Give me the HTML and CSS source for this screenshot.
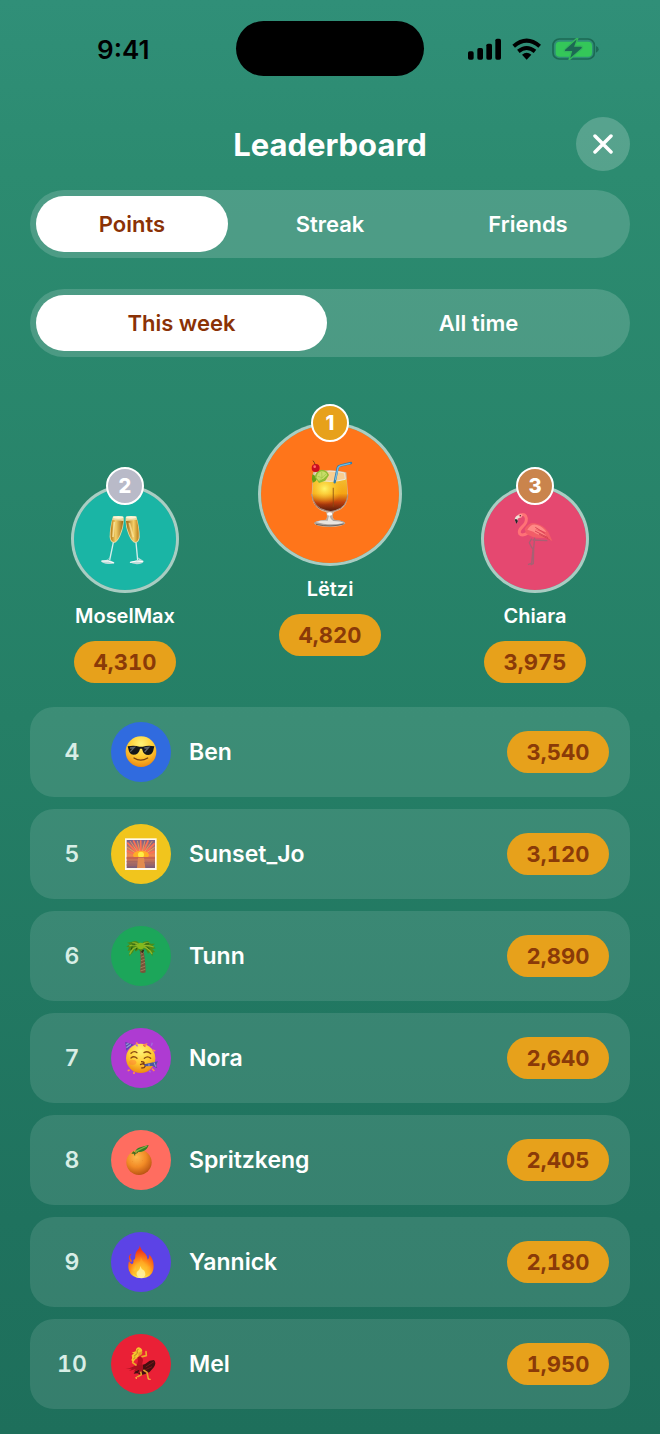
FILE: index.html
```html
<!DOCTYPE html>
<html lang="en">
<head>
<meta charset="utf-8">
<meta name="viewport" content="width=device-width, initial-scale=1">
<title>Leaderboard</title>
<link rel="stylesheet" href="styles.css">
</head>
<body>
<div class="status">
  <span class="status-time">9:41</span>
  <span class="island"></span>
  <span class="status-icons">
    <svg width="33" height="22" viewBox="54 52 99 66" aria-hidden="true"><rect x="54" y="92" width="17" height="25" rx="5"/><rect x="82" y="82" width="17" height="35" rx="5"/><rect x="109" y="69" width="17" height="48" rx="5"/><rect x="136" y="54" width="17" height="63" rx="5"/></svg>
    <svg width="29" height="22" viewBox="186 52 87 66" aria-hidden="true"><g fill="none" stroke="#000" stroke-width="12"><path d="M191 77Q230 43 269 77"/><path d="M205 92Q230 72 255 92"/></g><path d="M216 102Q230 91 244 102L230 117Z"/></svg>
    <svg width="47" height="22" viewBox="306 52 141 66" aria-hidden="true"><rect x="309" y="55" width="124" height="60" rx="19" fill="none" stroke="#1c6954" stroke-width="5"/><rect x="317" y="63" width="109" height="45" rx="12" fill="#34c759"/><path d="M438 76Q446 78 446 86T438 96Z" fill="#1c6954"/><path d="M379 54L344 86Q340 93 348 93H364L357 118L396 84Q400 76 392 76H375L383 54Z" fill="#1c6954" stroke="#34b75c" stroke-width="4"/></svg>
  </span>
</div>

<main class="page">
  <header class="header">
    <h1 class="title">Leaderboard</h1>
    <button class="close" type="button" aria-label="Close"><svg width="20" height="20" viewBox="0 0 20 20" aria-hidden="true"><path d="M2 2L18 18M18 2L2 18" fill="none" stroke="#fff" stroke-width="3.5" stroke-linecap="round"/></svg></button>
  </header>

  <nav class="segments" aria-label="Ranking">
    <button class="segment selected" type="button" aria-pressed="true">Points</button>
    <button class="segment" type="button" aria-pressed="false">Streak</button>
    <button class="segment" type="button" aria-pressed="false">Friends</button>
  </nav>
  <nav class="segments period" aria-label="Period">
    <button class="segment selected" type="button" aria-pressed="true">This week</button>
    <button class="segment" type="button" aria-pressed="false">All time</button>
  </nav>

  <section class="podium" aria-label="Top three">
    <article class="place">
      <div class="medal teal"><span class="badge silver">2</span>
        <svg width="56" height="56" viewBox="112 168 168 168" aria-hidden="true">
          <defs><linearGradient id="champagne" x1="0" x2="1"><stop offset="0" stop-color="#b77d16"/><stop offset=".4" stop-color="#f4cf68"/><stop offset="1" stop-color="#9d6812"/></linearGradient></defs>
          <g><path d="M160 184L192 188Q194 215 182 242Q173 262 162 264Q151 261 150 246Q150 217 160 184Z" fill="#e9d9a0"/><path d="M158 194L191 198Q189 220 180 241Q172 259 163 261Q153 258 153 245Q152 224 158 194Z" fill="url(#champagne)"/><path d="M164 201L160 246" stroke="#fff1b3" stroke-width="5" opacity=".7"/><ellipse cx="176" cy="187" rx="16" ry="4" fill="#fff4d2"/><path d="M161 262L150 315" stroke="#d5eeeb" stroke-width="4"/><path d="M150 307L145 315Q160 318 165 324Q157 329 138 326Q123 322 124 317L143 314Z" fill="#bfdcda"/><path d="M126 318Q147 315 163 324" fill="none" stroke="#fff" stroke-width="3"/></g>
          <g transform="translate(390 0) scale(-1 1)"><path d="M160 184L192 188Q194 215 182 242Q173 262 162 264Q151 261 150 246Q150 217 160 184Z" fill="#e9d9a0"/><path d="M158 194L191 198Q189 220 180 241Q172 259 163 261Q153 258 153 245Q152 224 158 194Z" fill="url(#champagne)"/><path d="M181 204L169 247" stroke="#ffeaa0" stroke-width="5" opacity=".7"/><ellipse cx="176" cy="187" rx="16" ry="4" fill="#fff4d2"/><path d="M161 262L156 315" stroke="#d5eeeb" stroke-width="4"/><path d="M156 307L152 315Q168 317 181 322Q168 329 151 327Q138 324 138 318Z" fill="#bfdcda"/><path d="M140 320Q158 315 179 322" fill="none" stroke="#fff" stroke-width="3"/></g>
        </svg>
      </div>
      <h2 class="name">MoselMax</h2><span class="score">4,310</span>
    </article>
    <article class="place first">
      <div class="medal orange"><span class="badge gold">1</span>
        <svg width="50" height="70" viewBox="165 192 150 210" aria-hidden="true">
          <defs><linearGradient id="drink" x2="0" y2="1"><stop offset="0" stop-color="#f3bc30"/><stop offset=".45" stop-color="#f5a414"/><stop offset=".72" stop-color="#bd3f0d"/><stop offset="1" stop-color="#541c0c"/></linearGradient><radialGradient id="glow" cx=".35" cy=".3" r=".5"><stop stop-color="#fff56a"/><stop offset="1" stop-color="#ffc71c" stop-opacity="0"/></radialGradient></defs>
          <path d="M189 232Q238 220 289 232L294 296Q294 342 253 351L248 358Q247 368 253 374Q284 377 286 385Q278 396 240 396Q199 396 192 385Q196 377 228 374Q233 367 229 352Q187 342 185 300Z" fill="#d8b79c"/>
          <path d="M190 252Q240 266 290 252L292 300Q292 339 253 347Q240 351 222 346Q187 337 187 300Z" fill="url(#drink)"/><path d="M190 252Q240 266 290 252L292 300Q292 339 253 347Q240 351 222 346Q187 337 187 300Z" fill="url(#glow)"/>
          <path d="M196 234Q240 223 284 234L286 253Q240 265 194 253Z" fill="#f8ce91" stroke="#efe9d9" stroke-width="3"/>
          <path d="M185 297Q190 339 229 347Q243 352 255 347Q291 337 294 298" fill="none" stroke="#a89086" stroke-width="3"/>
          <path d="M228 352Q240 357 252 352L247 360Q247 370 253 375H227Q232 370 232 360Z" fill="#b8aaa0"/>
          <path d="M250 335V278" stroke="#864b12" stroke-width="4" opacity=".6"/><path d="M254 262L263 218Q264 213 270 212L303 204" fill="none" stroke="#347cac" stroke-width="7" stroke-linecap="round"/><path d="M256 255L264 218Q266 214 272 212L301 205" fill="none" stroke="#70bce4" stroke-width="4"/>
          <path d="M187 238Q184 252 188 263Q199 261 203 247Z" fill="#659f15"/><path d="M194 246Q197 227 215 224Q232 225 237 240L226 257L207 264Z" fill="#91bc32"/><path d="M199 248Q202 230 216 229Q228 230 232 240L222 250L207 258Z" fill="#c7dc68"/><path d="M215 231L216 248L203 244M216 248L228 237M216 248L207 257" fill="none" stroke="#9ec443" stroke-width="2"/>
          <path d="M196 211Q194 202 189 197" fill="none" stroke="#754018" stroke-width="3"/><circle cx="197" cy="219" r="12" fill="#ca0c20"/><circle cx="194" cy="215" r="4" fill="#ff6b66"/>
          <ellipse cx="239" cy="384" rx="46" ry="10" fill="#aaa29d"/><path d="M197 381Q214 376 233 377L238 358Q239 372 250 378Q274 378 282 384Q253 390 220 386Z" fill="#e9e5e0"/><path d="M198 388Q241 398 281 387" fill="none" stroke="#6f6763" stroke-width="3"/><ellipse cx="239" cy="357" rx="8" ry="5" fill="#fff"/>
        </svg>
      </div>
      <h2 class="name">Lëtzi</h2><span class="score">4,820</span>
    </article>
    <article class="place">
      <div class="medal pink"><span class="badge bronze">3</span>
        <svg width="56" height="56" viewBox="111 168 168 168" aria-hidden="true">
          <path d="M185 251L178 263L184 276L189 282L185 324L174 329M194 247L191 280L190 326L182 330M188 255L232 257" fill="none" stroke="#a86073" stroke-width="4"/>
          <path d="M151 180Q166 174 169 190Q170 204 158 214Q144 227 149 236Q156 246 177 232" fill="none" stroke="#ff7276" stroke-width="9" stroke-linecap="round"/>
          <path d="M164 222Q178 199 201 206Q222 211 235 231L247 258L225 248Q208 251 190 247Q174 242 168 235Z" fill="#f25d68"/>
          <path d="M172 224Q184 204 201 210Q220 215 229 232Q208 223 194 223Q212 229 229 242Q205 242 190 230" fill="#ff8a86"/><path d="M196 217L225 235M195 228L234 248M207 237L239 254" stroke="#d94455" stroke-width="3"/>
          <path d="M145 178Q152 173 158 180L154 188L145 190Z" fill="#ff9795"/><path d="M145 180Q135 183 134 194L139 206L144 198L142 192L150 187Z" fill="#eee0d7"/><path d="M134 193L139 207L144 198L140 193Z" fill="#292228"/><circle cx="151" cy="182" r="2" fill="#472228"/>
        </svg>
      </div>
      <h2 class="name">Chiara</h2><span class="score">3,975</span>
    </article>
  </section>

  <ol class="list" start="4">
    <li class="row"><span class="rank">4</span><span class="avatar blue">
      <svg width="36" height="36" viewBox="0 0 108 108" aria-hidden="true"><defs><radialGradient id="face" cx=".5" cy=".25" r=".75"><stop stop-color="#fff477"/><stop offset=".55" stop-color="#ffcc32"/><stop offset="1" stop-color="#ed8910"/></radialGradient></defs><circle cx="54" cy="53" r="46" fill="url(#face)"/><path d="M14 37Q33 33 49 38H59Q76 33 94 37L92 44Q90 62 76 63Q61 63 57 44H51Q48 62 31 62Q18 60 16 44Z" fill="#151719"/><path d="M21 42L34 40L22 53M64 42L77 40L65 54" fill="none" stroke="#59616a" stroke-width="4"/><path d="M33 72Q53 85 74 72" fill="none" stroke="#79410c" stroke-width="4" stroke-linecap="round"/></svg>
    </span><span class="player">Ben</span><span class="score">3,540</span></li>
    <li class="row"><span class="rank">5</span><span class="avatar yellow">
      <svg width="36" height="36" viewBox="0 0 108 108" aria-hidden="true"><defs><linearGradient id="sky" x2="0" y2="1"><stop stop-color="#76618b"/><stop offset=".55" stop-color="#f18650"/><stop offset=".62" stop-color="#dc7b50"/><stop offset="1" stop-color="#785b78"/></linearGradient></defs><rect x="6" y="7" width="95" height="95" fill="#fff9ed"/><rect x="11" y="12" width="85" height="84" fill="url(#sky)"/><path d="M54 62L13 20M54 62L31 13M54 62L53 13M54 62L76 13M54 62L95 22M54 62L12 44M54 62L95 46" stroke="#ff7052" stroke-width="5"/><path d="M54 62L21 15M54 62L43 14M54 62L66 14M54 62L88 15M54 62L12 33M54 62L95 34" stroke="#ffae58" stroke-width="2"/><ellipse cx="54" cy="57" rx="24" ry="13" fill="#ffad25"/><circle cx="54" cy="56" r="9" fill="#ffed45"/><path d="M11 63H96V69H11Z" fill="#c7644f"/><path d="M45 65H63L67 96H42Z" fill="#e28b4e"/><path d="M11 77H43M64 80H96M11 87H40" stroke="#a7655e" stroke-width="3"/></svg>
    </span><span class="player">Sunset_Jo</span><span class="score">3,120</span></li>
    <li class="row"><span class="rank">6</span><span class="avatar green">
      <svg width="36" height="36" viewBox="70 82 108 108" aria-hidden="true"><path d="M120 117L130 115Q137 142 138 185Q129 190 121 184Q126 146 120 117Z" fill="#785439"/><path d="M123 131L131 126M124 140L133 136M124 150L135 146M123 161L136 155M122 172L137 166M122 181L137 176" stroke="#b58d65" stroke-width="2"/><path d="M119 117L129 128L134 117Z" fill="#302b16"/><path d="M122 105Q117 90 105 91L94 94L82 96L91 101L80 108L88 110L84 121L91 119L88 137L100 125L105 114L108 123L119 115L124 123L133 113L140 119L145 129L151 124L158 137L160 125L166 124L158 115L168 113L158 105L166 99L153 99L145 91L132 93Z" fill="#4c8b17"/><path d="M120 108Q106 98 89 106M120 108Q99 108 90 131M121 107Q112 94 98 97M125 107Q141 101 162 109M125 107Q146 109 157 130M124 106Q133 93 150 98" fill="none" stroke="#8fb529" stroke-width="4"/><path d="M98 108L94 117M107 101L96 100M142 108L150 116M137 100L149 99M112 111L108 119" stroke="#24580e" stroke-width="3"/><circle cx="123" cy="106" r="10" fill="#83b91d"/></svg>
    </span><span class="player">Tunn</span><span class="score">2,890</span></li>
    <li class="row"><span class="rank">7</span><span class="avatar purple">
      <svg width="36" height="36" viewBox="70 388 108 108" aria-hidden="true"><circle cx="123" cy="443" r="44" fill="url(#face)"/><path d="M77 394L102 402Q91 407 80 420Z" fill="#514ba6"/><path d="M79 402L87 398M80 411L94 401" stroke="#9491d4" stroke-width="4"/><path d="M94 428Q103 419 112 426M133 426Q144 419 153 429M94 442Q103 434 112 443M134 443Q144 434 153 443" fill="none" stroke="#8b4b12" stroke-width="4" stroke-linecap="round"/><ellipse cx="99" cy="455" rx="11" ry="8" fill="#ff7b37" opacity=".45"/><path d="M124 453Q137 453 132 460Q142 463 133 471L125 472M131 459L121 462" fill="none" stroke="#783714" stroke-width="4"/><path d="M134 461L161 455L175 452Q166 465 173 473L158 466L136 467Z" fill="#4e559f"/><path d="M148 459V466M163 455L168 468" stroke="#9da4d5" stroke-width="3"/><path d="M109 396L115 400M130 404L139 401L135 409M158 418L167 421M84 480L90 478M103 483V490M157 474L164 481" stroke="#ff8b52" stroke-width="5"/><path d="M158 396L155 405M153 485L148 480M109 403L114 407" stroke="#a46bde" stroke-width="4"/></svg>
    </span><span class="player">Nora</span><span class="score">2,640</span></li>
    <li class="row"><span class="rank">8</span><span class="avatar coral">
      <svg width="36" height="36" viewBox="70 94 108 108" aria-hidden="true"><defs><radialGradient id="orange" cx=".4" cy=".3" r=".7"><stop stop-color="#ffb94f"/><stop offset=".55" stop-color="#f28b26"/><stop offset="1" stop-color="#bd5613"/></radialGradient></defs><circle cx="118" cy="155" r="38" fill="url(#orange)"/><path d="M101 122L109 126L118 120L114 127L107 130L106 137L102 129L95 129Z" fill="#466e21"/><path d="M105 127Q108 114 122 110Q136 105 147 103Q143 116 132 121Q119 127 109 121Z" fill="#337c26"/><path d="M107 123Q123 115 142 106" fill="none" stroke="#82b346" stroke-width="4"/><g fill="#e47d24"><circle cx="98" cy="152" r="1"/><circle cx="112" cy="166" r="1"/><circle cx="128" cy="149" r="1"/><circle cx="133" cy="168" r="1"/><circle cx="112" cy="145" r="1"/></g></svg>
    </span><span class="player">Spritzkeng</span><span class="score">2,405</span></li>
    <li class="row"><span class="rank">9</span><span class="avatar indigo">
      <svg width="36" height="36" viewBox="70 401 108 108" aria-hidden="true"><defs><radialGradient id="fire" cx=".5" cy=".92" r=".85"><stop stop-color="#fffce1"/><stop offset=".25" stop-color="#ffe23c"/><stop offset=".55" stop-color="#ff8c17"/><stop offset=".9" stop-color="#ef351c"/></radialGradient></defs><path d="M120 404Q123 419 137 430Q144 437 144 448Q151 441 148 432Q162 446 162 468Q162 501 126 504Q93 503 87 477Q84 464 88 452Q91 459 97 462Q103 459 101 449Q107 448 107 439Q105 427 114 419Q121 413 120 404ZM96 430Q89 437 93 445Q99 452 94 456Q86 450 88 438Q90 431 96 430Z" fill="url(#fire)"/><path d="M123 438Q125 449 135 459Q142 466 140 475Q147 472 149 465Q154 500 126 502Q105 501 98 482Q107 485 108 477Q108 467 113 463Q124 455 123 438Z" fill="#ffad24" opacity=".55"/><path d="M122 467Q125 478 134 481Q143 500 125 503Q107 499 112 484Q121 480 122 467Z" fill="#fff5a1" opacity=".8"/></svg>
    </span><span class="player">Yannick</span><span class="score">2,180</span></li>
    <li class="row"><span class="rank">10</span><span class="avatar red">
      <svg width="36" height="36" viewBox="281 106 108 108" aria-hidden="true"><path d="M336 164Q350 160 361 150L374 148Q382 157 374 169L361 184Q347 191 334 194L324 188L313 189L318 182L330 176Z" fill="#420f10"/><path d="M323 160L341 162Q343 175 338 184L326 189L330 177L312 183L319 175L299 181L308 174L289 175Q312 171 323 160Z" fill="#aa1020"/><path d="M349 169L374 153M345 179L368 168" stroke="#791519" stroke-width="3"/><path d="M323 138H338L341 149L338 163L323 162L326 150Z" fill="#b80e22"/><path d="M322 141Q311 145 310 156L320 163M338 138L351 135L350 123" fill="none" stroke="#efa82a" stroke-width="5" stroke-linecap="round" stroke-linejoin="round"/><path d="M342 178L353 185L357 205M334 183L336 192L325 198" fill="none" stroke="#e9a12c" stroke-width="5" stroke-linejoin="round"/><path d="M356 205L364 206M325 198L319 201L322 205" fill="none" stroke="#ffcc3c" stroke-width="3"/><path d="M331 119Q340 118 339 128Q337 135 330 136Q325 132 326 125Z" fill="#e69b2a"/><path d="M339 121Q337 110 326 110Q319 113 319 122L307 126L314 128L307 134Q310 141 306 149L312 153L320 143L329 137L327 126Z" fill="#f6c52e"/><path d="M327 115Q321 119 324 128L314 137M312 145L318 140" fill="none" stroke="#9b5d15" stroke-width="2"/></svg>
    </span><span class="player">Mel</span><span class="score">1,950</span></li>
  </ol>
</main>
</body>
</html>
```
FILE: styles.css
```css
* { box-sizing: border-box; }

body {
  margin: 0;
  min-height: 100vh;
  background: linear-gradient(180deg, #308f78 0%, #2c8b70 12%, #257f66 50%, #1f725e 85%, #1e6f5b 100%);
  color: #fff;
  font-family: Inter, "Liberation Sans", sans-serif;
  font-weight: 600;
}

button { border: 0; font: inherit; color: inherit; cursor: pointer; }
svg { display: block; flex: none; }

.status {
  display: grid;
  grid-template-columns: 1fr 188px 1fr;
  align-items: center;
  padding-top: 21px;
  color: #000;
}
.status-time { padding: 2px 0 0 97px; font-size: 26px; line-height: 32px; }
.island { height: 55px; border-radius: 28px; background: #000; }
.status-icons { display: flex; justify-content: flex-end; gap: 11px; padding-right: 61px; }

.page { padding: 41px 30px 26px; }

.header {
  display: grid;
  grid-template-columns: 54px 1fr 54px;
  align-items: center;
  margin-bottom: 19px;
}
.title { grid-column: 2; margin: 0; padding-top: 2px; text-align: center; font-size: 31px; line-height: 40px; font-weight: 700; }
.close {
  display: grid;
  place-items: center;
  width: 54px;
  height: 54px;
  padding: 0;
  border-radius: 50%;
  background: rgba(255, 255, 255, .2);
}

.segments {
  display: flex;
  gap: 6px;
  padding: 6px;
  margin-bottom: 31px;
  border-radius: 34px;
  background: rgba(255, 255, 255, .16);
}
.segment {
  flex: 1 1 0;
  padding: 14px 0;
  border-radius: 28px;
  background: transparent;
  font-size: 22px;
  line-height: 28px;
}
.segment.selected { background: #fff; color: #8a3206; }

.podium {
  display: grid;
  grid-template-columns: repeat(3, 1fr);
  gap: 15px;
  align-items: end;
  padding-top: 34px;
  margin-bottom: 24px;
}
.place { display: flex; flex-direction: column; align-items: center; }
.place.first { padding-bottom: 27px; }
.medal {
  position: relative;
  display: grid;
  place-items: center;
  width: 108px;
  height: 108px;
  border: 3px solid rgba(255, 255, 255, .6);
  border-radius: 50%;
  background-clip: padding-box;
}
.first .medal { width: 144px; height: 144px; }
.badge {
  position: absolute;
  top: -21px;
  left: 50%;
  width: 38px;
  height: 38px;
  margin-left: -19px;
  border: 2px solid #fff;
  border-radius: 50%;
  text-align: center;
  font-size: 20px;
  line-height: 34px;
  font-weight: 800;
}
.name { margin: 10px 0 12px; font-size: 20px; line-height: 26px; font-weight: 600; }
.score {
  min-width: 102px;
  padding: 0 16px;
  border-radius: 21px;
  background: #e7a11b;
  color: #8a3a08;
  text-align: center;
  font-size: 22px;
  line-height: 42px;
  font-weight: 700;
  font-variant-numeric: tabular-nums;
}

.list { display: grid; gap: 12px; margin: 0; padding: 0; list-style: none; }
.row {
  display: grid;
  grid-template-columns: 42px 60px 1fr auto;
  align-items: center;
  gap: 18px;
  padding: 15px 21px;
  border-radius: 24px;
  background: rgba(255, 255, 255, .11);
}
.rank { text-align: center; font-size: 23px; line-height: 30px; color: #d8eee6; font-variant-numeric: tabular-nums; }
.player { font-size: 23px; line-height: 30px; }
.avatar { display: grid; place-items: center; width: 60px; height: 60px; border-radius: 50%; }

.teal { background-color: #1ab5a5; }
.orange { background-color: #ff751a; }
.pink { background-color: #e54870; }
.blue { background: #306bdf; }
.yellow { background: #f1c51d; }
.green { background: #1ca65a; }
.purple { background: #ae3bd2; }
.coral { background: #ff6d60; }
.indigo { background: #5c43e6; }
.red { background: #ea2036; }
.silver { background-color: #b9bac8; }
.gold { background-color: #e7a11b; }
.bronze { background-color: #ca844c; }
```
